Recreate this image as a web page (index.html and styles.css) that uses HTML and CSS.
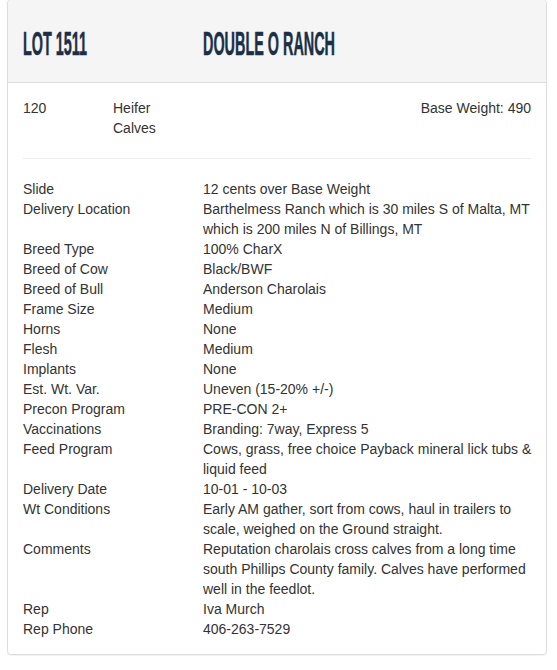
FILE: index.html
```html
<!DOCTYPE html>
<html>
<head>
<meta charset="utf-8">
<link rel="stylesheet" href="styles.css">
</head>
<body>
<div class="card">
  <div class="card-head">
    <div class="head-col lot"><span class="head-text">LOT 1511</span></div>
    <div class="head-col"><span class="head-text">DOUBLE O RANCH</span></div>
  </div>
  <div class="card-body">
    <div class="summary">
      <div class="qty">120</div>
      <div class="kind">Heifer Calves</div>
      <div class="base">Base Weight: 490</div>
    </div>
    <div class="details">
      <div class="row"><div class="label">Slide</div><div class="value">12 cents over Base Weight</div></div>
      <div class="row"><div class="label">Delivery Location</div><div class="value">Barthelmess Ranch which is 30 miles S of Malta, MT which is 200 miles N of Billings, MT</div></div>
      <div class="row"><div class="label">Breed Type</div><div class="value">100% CharX</div></div>
      <div class="row"><div class="label">Breed of Cow</div><div class="value">Black/BWF</div></div>
      <div class="row"><div class="label">Breed of Bull</div><div class="value">Anderson Charolais</div></div>
      <div class="row"><div class="label">Frame Size</div><div class="value">Medium</div></div>
      <div class="row"><div class="label">Horns</div><div class="value">None</div></div>
      <div class="row"><div class="label">Flesh</div><div class="value">Medium</div></div>
      <div class="row"><div class="label">Implants</div><div class="value">None</div></div>
      <div class="row"><div class="label">Est. Wt. Var.</div><div class="value">Uneven (15-20% +/-)</div></div>
      <div class="row"><div class="label">Precon Program</div><div class="value">PRE-CON 2+</div></div>
      <div class="row"><div class="label">Vaccinations</div><div class="value">Branding: 7way, Express 5</div></div>
      <div class="row"><div class="label">Feed Program</div><div class="value">Cows, grass, free choice Payback mineral lick tubs &amp; liquid feed</div></div>
      <div class="row"><div class="label">Delivery Date</div><div class="value">10-01 - 10-03</div></div>
      <div class="row"><div class="label">Wt Conditions</div><div class="value">Early AM gather, sort from cows, haul in trailers to scale, weighed on the Ground straight.</div></div>
      <div class="row"><div class="label">Comments</div><div class="value">Reputation charolais cross calves from a long time south Phillips County family. Calves have performed well in the feedlot.</div></div>
      <div class="row"><div class="label">Rep</div><div class="value">Iva Murch</div></div>
      <div class="row"><div class="label">Rep Phone</div><div class="value">406-263-7529</div></div>
    </div>
  </div>
</div>
</body>
</html>
```

FILE: styles.css
```css
html, body {
  margin: 0;
  padding: 0;
  background: #fff;
}
body {
  font-family: "Liberation Sans", Arial, sans-serif;
  font-size: 14px;
  line-height: 20px;
  color: #333;
}
.card {
  margin: -1px 10px 15px 7px;
  border: 1px solid #ddd;
  border-radius: 4px;
  box-shadow: 0 1px 1px rgba(0,0,0,0.05);
  overflow: hidden;
}
.card-head {
  display: flex;
  align-items: center;
  height: 82px;
  padding: 0 15px;
  background: #f5f5f5;
  border-bottom: 1px solid #ddd;
}
.head-col {
  display: flex;
  align-items: center;
}
.head-col.lot {
  width: 180px;
  flex: none;
}
.head-text {
  display: inline-block;
  font-family: "Liberation Sans", Arial, sans-serif;
  font-weight: bold;
  font-size: 24px;
  line-height: 24px;
  color: #1b3047;
  transform: scale(0.6, 1.38);
  transform-origin: left center;
  white-space: nowrap;
  margin-top: 5px;
  -webkit-text-stroke: 0.4px #1b3047;
}
.card-body {
  padding: 15px 15px 15px;
}
.summary {
  display: flex;
  padding-bottom: 20px;
  border-bottom: 1px solid #eee;
  margin-bottom: 20px;
}
.qty {
  width: 90px;
  flex: none;
}
.kind {
  width: 60px;
  flex: none;
}
.base {
  flex: 1;
  text-align: right;
}
.row {
  display: flex;
}
.label {
  width: 180px;
  flex: none;
}
.value {
  flex: 1;
  margin-right: -6px;
}
```
